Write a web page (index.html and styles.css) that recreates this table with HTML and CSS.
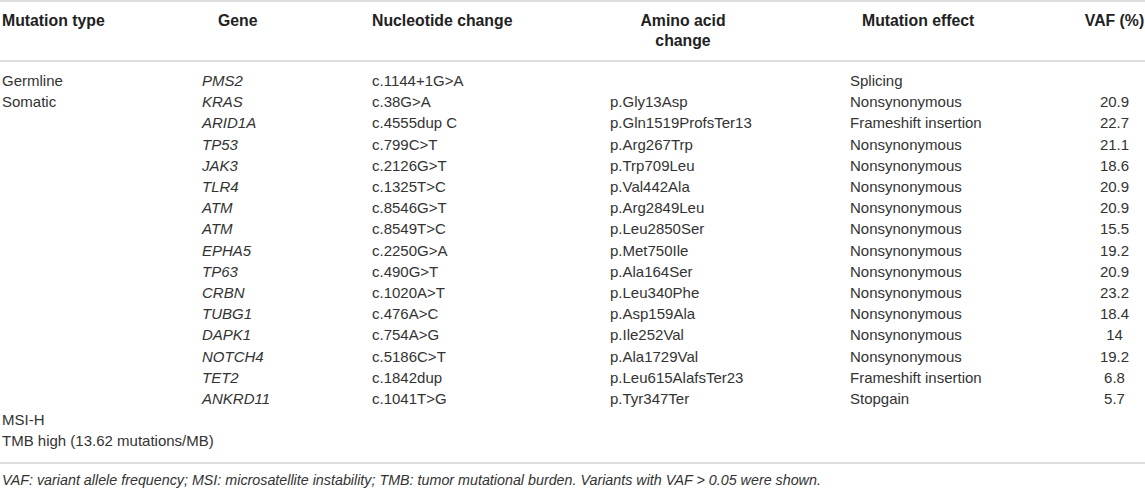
FILE: index.html
```html
<!DOCTYPE html>
<html>
<head>
<meta charset="utf-8">
<link rel="stylesheet" href="styles.css">
</head>
<body>
<table class="mut">
  <colgroup>
    <col class="c1"><col class="c2"><col class="c3"><col class="c4"><col class="c5"><col class="c6">
  </colgroup>
  <thead>
    <tr>
      <th class="h-type">Mutation type</th>
      <th class="h-gene">Gene</th>
      <th class="h-nuc">Nucleotide change</th>
      <th class="h-aa"><div class="aa-wrap">Amino acid change</div></th>
      <th class="h-eff">Mutation effect</th>
      <th class="h-vaf">VAF (%)</th>
    </tr>
  </thead>
  <tbody>
    <tr class="first"><td>Germline</td><td class="gene">PMS2</td><td>c.1144+1G&gt;A</td><td></td><td>Splicing</td><td class="vaf"></td></tr>
    <tr><td>Somatic</td><td class="gene">KRAS</td><td>c.38G&gt;A</td><td>p.Gly13Asp</td><td>Nonsynonymous</td><td class="vaf">20.9</td></tr>
    <tr><td></td><td class="gene">ARID1A</td><td>c.4555dup C</td><td>p.Gln1519ProfsTer13</td><td>Frameshift insertion</td><td class="vaf">22.7</td></tr>
    <tr><td></td><td class="gene">TP53</td><td>c.799C&gt;T</td><td>p.Arg267Trp</td><td>Nonsynonymous</td><td class="vaf">21.1</td></tr>
    <tr><td></td><td class="gene">JAK3</td><td>c.2126G&gt;T</td><td>p.Trp709Leu</td><td>Nonsynonymous</td><td class="vaf">18.6</td></tr>
    <tr><td></td><td class="gene">TLR4</td><td>c.1325T&gt;C</td><td>p.Val442Ala</td><td>Nonsynonymous</td><td class="vaf">20.9</td></tr>
    <tr><td></td><td class="gene">ATM</td><td>c.8546G&gt;T</td><td>p.Arg2849Leu</td><td>Nonsynonymous</td><td class="vaf">20.9</td></tr>
    <tr><td></td><td class="gene">ATM</td><td>c.8549T&gt;C</td><td>p.Leu2850Ser</td><td>Nonsynonymous</td><td class="vaf">15.5</td></tr>
    <tr><td></td><td class="gene">EPHA5</td><td>c.2250G&gt;A</td><td>p.Met750Ile</td><td>Nonsynonymous</td><td class="vaf">19.2</td></tr>
    <tr><td></td><td class="gene">TP63</td><td>c.490G&gt;T</td><td>p.Ala164Ser</td><td>Nonsynonymous</td><td class="vaf">20.9</td></tr>
    <tr><td></td><td class="gene">CRBN</td><td>c.1020A&gt;T</td><td>p.Leu340Phe</td><td>Nonsynonymous</td><td class="vaf">23.2</td></tr>
    <tr><td></td><td class="gene">TUBG1</td><td>c.476A&gt;C</td><td>p.Asp159Ala</td><td>Nonsynonymous</td><td class="vaf">18.4</td></tr>
    <tr><td></td><td class="gene">DAPK1</td><td>c.754A&gt;G</td><td>p.Ile252Val</td><td>Nonsynonymous</td><td class="vaf">14</td></tr>
    <tr><td></td><td class="gene">NOTCH4</td><td>c.5186C&gt;T</td><td>p.Ala1729Val</td><td>Nonsynonymous</td><td class="vaf">19.2</td></tr>
    <tr><td></td><td class="gene">TET2</td><td>c.1842dup</td><td>p.Leu615AlafsTer23</td><td>Frameshift insertion</td><td class="vaf">6.8</td></tr>
    <tr><td></td><td class="gene">ANKRD11</td><td>c.1041T&gt;G</td><td>p.Tyr347Ter</td><td>Stopgain</td><td class="vaf">5.7</td></tr>
    <tr><td colspan="6">MSI-H</td></tr>
    <tr class="last"><td colspan="6">TMB high (13.62 mutations/MB)</td></tr>
  </tbody>
</table>
<p class="note">VAF: variant allele frequency; MSI: microsatellite instability; TMB: tumor mutational burden. Variants with VAF &gt; 0.05 were shown.</p>
</body>
</html>
```
FILE: styles.css
```css
html, body {
  margin: 0;
  padding: 0;
  background: #fff;
}
body {
  font-family: "Liberation Sans", Arial, Helvetica, sans-serif;
  color: #333;
}
.mut {
  width: 1145px;
  border-collapse: collapse;
  table-layout: fixed;
  font-size: 15px;
  line-height: 21.2px;
}
.c1 { width: 200px; }
.c2 { width: 170px; }
.c3 { width: 238px; }
.c4 { width: 240px; }
.c5 { width: 236px; }
.c6 { width: 61px; }

.mut th {
  font-size: 15.8px;
  line-height: 20px;
  font-weight: bold;
  color: #222;
  text-align: left;
  vertical-align: top;
  padding: 9px 0 9px 2px;
  border-top: 2px solid #ddd;
  border-bottom: 2px solid #ddd;
  white-space: nowrap;
}
.mut th.h-gene { padding-left: 18px; }
.mut th.h-aa { padding-left: 30px; white-space: normal; }
.aa-wrap { width: 90px; text-align: center; }
.mut th.h-eff { padding-left: 14px; }
.mut th.h-vaf { text-align: center; padding-left: 0; }

.mut td {
  padding: 0 0 0 2px;
  white-space: nowrap;
  vertical-align: top;
}
.mut td.gene { font-style: italic; }
.mut td.vaf { text-align: center; padding-left: 0; padding-right: 0; }
.mut tr.first td { padding-top: 8px; }
.mut tr.last td {
  padding-bottom: 10px;
  border-bottom: 2px solid #ddd;
}
.note {
  margin: 8px 0 0 2px;
  font-size: 14.3px;
  line-height: 16px;
  font-style: italic;
  color: #333;
}
```
